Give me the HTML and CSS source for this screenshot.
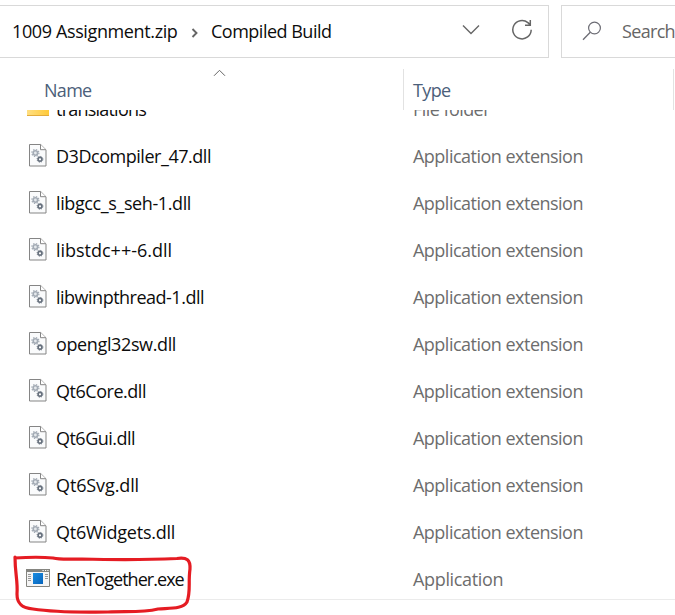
FILE: index.html
```
<!DOCTYPE html>
<html lang="en">
<head>
<meta charset="utf-8">
<title>Compiled Build</title>
<link rel="stylesheet" href="styles.css">
</head>
<body>
<svg class="defs" aria-hidden="true">
  <symbol id="dll" viewBox="0 0 24 24">
    <path d="M3.5 1.5h11.2l5.3 5.3v16.2h-16.5z" fill="#fafbfc" stroke="#858585"/>
    <path d="M14.5 1.5v5.2h5.3" fill="#fff" stroke="#858585"/>
    <circle cx="9.4" cy="10" r="2.2" fill="#e4e8ec" stroke="#a3abb5" stroke-width="1.6"/>
    <circle cx="9.4" cy="10" r="3.5" fill="none" stroke="#a3abb5" stroke-width="1.2" stroke-dasharray="1.4 1.35"/>
    <circle cx="14" cy="16.3" r="1.9" fill="#fff" stroke="#66707d" stroke-width="1.6"/>
    <circle cx="14" cy="16.3" r="2.9" fill="none" stroke="#66707d" stroke-width=".9" stroke-dasharray="1.2 1.08"/>
  </symbol>
</svg>
<header class="toolbar">
  <div class="address">
    <span class="crumb ls-zip">1009 Assignment.zip</span>
    <svg class="sep" width="8" height="10" viewBox="0 0 8 10"><path d="M1.5 1l4 4-4 4" fill="none" stroke="#666" stroke-width="1.9"/></svg>
    <span class="crumb ls-build">Compiled Build</span>
    <svg class="down" width="18" height="12" viewBox="0 0 18 12"><path d="M1 1.5l8 8 8-8" fill="none" stroke="#666" stroke-width="1.4"/></svg>
    <svg class="refresh" width="22" height="22" viewBox="0 0 22 22"><path d="M20.2 10.8a9.2 9.2 0 1 1-3.3-7.2l2.2 2M19.3 1v5.2h-5.3" fill="none" stroke="#666" stroke-width="1.5"/></svg>
  </div>
  <div class="search">
    <svg width="20" height="20" viewBox="0 0 20 20"><circle cx="12.5" cy="7" r="5.9" fill="none" stroke="#6c6c74" stroke-width="1.2"/><path d="M8.3 11.3L1 18.7" stroke="#6c6c74" stroke-width="1.3"/></svg>
    <span class="ls-search">Search</span>
  </div>
</header>
<div class="columns">
  <div class="col-name"><span class="ls-name">Name</span>
    <svg class="sort" width="13" height="8" viewBox="0 0 13 8"><path d="M1 6.8l5.5-5.5 5.5 5.5" fill="none" stroke="#666"/></svg>
  </div>
  <div class="col-type"><span class="ls-type">Type</span></div>
</div>
<main class="list">
  <div class="row cut"><svg class="icon" viewBox="0 0 24 24"><defs><linearGradient id="fold" x2="1"><stop stop-color="#ffdf83"/><stop offset="1" stop-color="#ffca39"/></linearGradient></defs><path d="M1 4h8l2 2h12v16H1z" fill="url(#fold)"/><path d="M1 22.5h22" stroke="#e2ab3c"/></svg><span class="file ls-translations">translations</span><span class="type ls-folder">File folder</span></div>
  <div class="row"><svg class="icon"><use href="#dll"/></svg><span class="file ls-d3d">D3Dcompiler_47.dll</span><span class="type">Application extension</span></div>
  <div class="row"><svg class="icon"><use href="#dll"/></svg><span class="file ls-gcc">libgcc_s_seh-1.dll</span><span class="type">Application extension</span></div>
  <div class="row"><svg class="icon"><use href="#dll"/></svg><span class="file ls-std">libstdc++-6.dll</span><span class="type">Application extension</span></div>
  <div class="row"><svg class="icon"><use href="#dll"/></svg><span class="file ls-pthread">libwinpthread-1.dll</span><span class="type">Application extension</span></div>
  <div class="row"><svg class="icon"><use href="#dll"/></svg><span class="file ls-opengl">opengl32sw.dll</span><span class="type">Application extension</span></div>
  <div class="row"><svg class="icon"><use href="#dll"/></svg><span class="file ls-core">Qt6Core.dll</span><span class="type">Application extension</span></div>
  <div class="row"><svg class="icon"><use href="#dll"/></svg><span class="file ls-gui">Qt6Gui.dll</span><span class="type">Application extension</span></div>
  <div class="row"><svg class="icon"><use href="#dll"/></svg><span class="file ls-svg">Qt6Svg.dll</span><span class="type">Application extension</span></div>
  <div class="row"><svg class="icon"><use href="#dll"/></svg><span class="file ls-widgets">Qt6Widgets.dll</span><span class="type">Application extension</span></div>
  <div class="row last"><svg class="icon" viewBox="0 0 24 24"><defs><linearGradient id="app" x2="1" y2="1"><stop stop-color="#1b8de0"/><stop offset="1" stop-color="#0764bd"/></linearGradient></defs><path d="M.5 3.5h23v17H.5z" fill="#f5f5f5" stroke="#858580"/><path d="M0 3h24v3H0z" fill="#858580"/><path d="M16.5 4.5h1.2M19 4.5h1.2M21.3 4.5h1.2" stroke="#fff"/><path d="M2 8.5h3M2 10.5h3M2 12.5h3M2 14.5h3M19 8.5h3M19 10.5h3M19 12.5h3" stroke="#999"/><path d="M7 7h10v11H7z" fill="url(#app)"/></svg><span class="file ls-ren">RenTogether.exe</span><span class="type ls-app">Application</span></div>
</main>
<svg class="annotation" width="190" height="66" viewBox="8 549 190 66"><path d="M15 558C30 557 43 557 53 558C61 560 72 559 82 559C117 560 145 560 177 558.5C187 557 190.5 560 190 569C188 583 191 591 187 602C183 609 170 608 158 609C142 613 126 611 108 612C83 612 59 613 33 609C20 608 17 602 17 594C18 581 15 574 15 557" fill="none" stroke="#e51c23" stroke-width="3.2" stroke-linecap="round" stroke-linejoin="round"/></svg>
</body>
</html>
```
FILE: styles.css
```
* { box-sizing: border-box; }
body {
  margin: 0;
  height: 615px;
  overflow: hidden;
  position: relative;
  background: #fff;
  color: #0c0c0c;
  font: 18px/24px "Open Sans", "Noto Sans", sans-serif;
  white-space: nowrap;
}
svg { display: block; flex: none; }
.defs { display: none; }
.toolbar { display: flex; gap: 12px; padding-top: 5px; }
.address {
  display: flex;
  align-items: center;
  width: 549px;
  height: 53px;
  padding: 0 15px 1px 12px;
  border: 1px solid #d9d9d9;
  border-left: 0;
}
.address .crumb:first-child { width: 167px; }
.sep { margin: 3px 12px 0; }
.down { margin: -3px 0 0 auto; }
.refresh { margin: -3px 0 0 31px; }
.search {
  display: flex;
  flex: 1;
  align-items: center;
  gap: 20px;
  min-width: 0;
  height: 53px;
  padding: 0 0 1px 20px;
  border: 1px solid #d9d9d9;
  border-right: 0;
  color: #666;
}
.search svg { margin-top: -1px; }
.columns {
  display: grid;
  grid-template-columns: 404px 270px 1px;
  height: 52px;
  padding-top: 11px;
  color: #4c607a;
}
.col-name, .col-type {
  display: flex;
  align-items: flex-start;
  padding-top: 9px;
  border-right: 1px solid #e2e2e2;
}
.col-name { padding-left: 44px; }
.col-type { padding-left: 9px; }
.sort { margin: -9px 177px 0 auto; }
.list { height: 490px; overflow: hidden; }
.row {
  display: grid;
  grid-template-columns: 30px 357px 1fr;
  align-items: center;
  height: 47px;
  padding: 0 0 1px 26px;
}
.cut { margin-top: -24px; }
.last { height: 44px; border-bottom: 1px solid #ebebeb; padding-bottom: 0; }
.icon { width: 24px; height: 24px; margin-top: -2px; }
.cut .icon { margin-top: -9px; }
.last .icon { margin-top: 1px; }
.last span { padding-top: 2px; }
.type { color: #6d6d6d; letter-spacing: -.512px; }
.annotation { position: absolute; left: 8px; top: 549px; }
.ls-zip { letter-spacing: -.378px; }
.ls-build { letter-spacing: -.5px; }
.ls-search { letter-spacing: -.667px; }
.ls-name { letter-spacing: -.707px; }
.ls-type { letter-spacing: -.641px; }
.ls-translations { letter-spacing: -.78px; }
.ls-d3d { letter-spacing: -.466px; }
.ls-gcc { letter-spacing: -.394px; }
.ls-std { letter-spacing: -.016px; }
.ls-pthread { letter-spacing: -.5px; }
.ls-opengl { letter-spacing: -.375px; }
.ls-core { letter-spacing: -.47px; }
.ls-gui { letter-spacing: -.522px; }
.ls-svg { letter-spacing: -.119px; }
.ls-widgets { letter-spacing: -.256px; }
.ls-ren { letter-spacing: -.96px; }
.type.ls-app { letter-spacing: -.34px; }
.type.ls-folder { letter-spacing: -.553px; }
```
